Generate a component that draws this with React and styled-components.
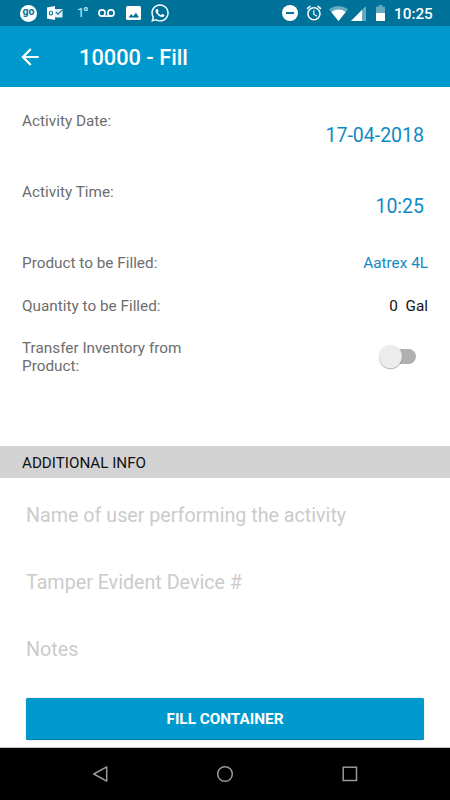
import React from "react";
import styled, { createGlobalStyle } from "styled-components";
import { MdArrowBack, MdAlarm } from "react-icons/md";
import { FaWhatsapp } from "react-icons/fa";

const GlobalStyle = createGlobalStyle`
  * { box-sizing: border-box; }
  body { margin: 0; background: #fff; font-family: Roboto, sans-serif; }
`;

const Screen = styled.div`
  display: flex;
  flex-direction: column;
  width: 450px;
  height: 800px;
  background: #fff;
  overflow: hidden;
`;

const StatusBar = styled.header`
  display: flex;
  justify-content: space-between;
  height: 26px;
  flex: none;
  padding: 0 17px 0 20px;
  background: #007299;
  color: #fff;
`;

const StatusGroup = styled.div`
  display: flex;
  align-items: center;
  height: 26px;
`;

const StatusIcon = styled.span`
  display: flex;
  flex: none;
  width: ${(p) => p.$width}px;
  margin-right: ${(p) => p.$gap || 0}px;
  svg { display: block; flex: none; }
`;

const GoBadge = styled.span`
  width: 17px;
  height: 17px;
  margin-right: 10px;
  border-radius: 50%;
  background: #fff;
  color: #007299;
  font-size: 10.5px;
  font-weight: 700;
  line-height: 14px;
  text-align: center;
`;

const Temperature = styled.span`
  display: flex;
  width: 11px;
  margin-right: 10px;
  color: #d6e8ef;
  font-size: 13px;
  line-height: 26px;
  white-space: nowrap;
`;

const Degree = styled.span`
  margin-left: -1.5px;
  padding-top: 1px;
  font-size: 16px;
`;

const Clock = styled.span`
  width: 39px;
  padding-top: 2px;
  font-size: 15.3px;
  font-weight: 500;
  line-height: 26px;
  white-space: nowrap;
`;

const AppBar = styled.div`
  display: flex;
  align-items: center;
  flex: none;
  height: 61px;
  padding-left: 17px;
  background: #0099cd;
  color: #fff;
`;

const BackButton = styled.button`
  display: flex;
  margin: 0 36px 0 0;
  padding: 0;
  border: 0;
  background: none;
  color: inherit;
`;

const Title = styled.h1`
  margin: 3px 0 0;
  font-size: 21.8px;
  font-weight: 500;
  line-height: 26px;
`;

const Details = styled.main`
  flex: none;
  height: 359px;
  padding: 25px 22px 0;
`;

const Row = styled.div`
  display: flex;
  justify-content: space-between;
  height: ${(p) => p.$height}px;
`;

const Label = styled.div`
  width: 180px;
  color: #6d6d6d;
  font-size: 15.32px;
  line-height: 18px;
`;

const PickerValue = styled.div`
  padding: 12px 4px 0 0;
  color: #108ac4;
  font-size: 19.5px;
  line-height: 24px;
`;

const Value = styled.div`
  color: ${(p) => (p.$link ? "#108ac4" : "#111")};
  font-size: 15.32px;
  line-height: 18px;
  white-space: pre;
`;

const Switch = styled.div`
  display: flex;
  align-items: center;
  width: 34px;
  height: 15px;
  margin: 10px 12px 0 0;
  border-radius: 8px;
  background: #b0b0b0;
`;

const Thumb = styled.span`
  width: 23px;
  height: 23px;
  margin-left: -3px;
  border-radius: 50%;
  background: #ececec;
  box-shadow: 0 1px 1px rgba(0, 0, 0, 0.3);
`;

const SectionHeader = styled.h2`
  flex: none;
  height: 32px;
  margin: 0;
  padding: 1px 22px 0;
  background: #d3d3d3;
  color: #111;
  font-size: 15.2px;
  font-weight: 400;
  line-height: 32px;
`;

const Form = styled.form`
  display: flex;
  flex-direction: column;
  flex: 1;
  padding: 4px 26px 0;
  border-bottom: 1px solid #c4c4c4;
`;

const Field = styled.input`
  flex: none;
  width: 100%;
  height: 67px;
  padding: 0;
  border: 0;
  outline: 0;
  background: transparent;
  font: 400 19.7px Roboto, sans-serif;
  &::placeholder { color: #cbcbcb; opacity: 1; }
`;

const SubmitButton = styled.button`
  flex: none;
  height: 42px;
  margin-top: 15px;
  padding: 0;
  border: 0;
  border-radius: 2px;
  background: #0099cd;
  box-shadow: inset 0 -1px #0084b3, 0 0 1px rgba(0, 0, 0, 0.5);
  color: #fff;
  font: 700 15.3px/42px Roboto, sans-serif;
`;

const NavBar = styled.nav`
  display: flex;
  justify-content: space-between;
  align-items: center;
  flex: none;
  height: 52px;
  padding: 0 91px;
  background: #000;
`;

const NavIcon = styled.svg`
  display: block;
  width: 18px;
  height: 18px;
  fill: none;
  stroke: #999;
  stroke-width: 1.5;
`;

const fields = ["Name of user performing the activity", "Tamper Evident Device #", "Notes"];

export default function App() {
  return (
    <>
      <GlobalStyle />
      <Screen>
        <StatusBar>
          <StatusGroup>
            <GoBadge>go</GoBadge>
            <StatusIcon $width={16} $gap={14}>
              <svg width="16" height="16" viewBox="0 0 16 16">
                <path d="M0 2.5 8 1v14l-8-1.5z" fill="#fff" />
                <ellipse cx="4" cy="8" rx="1.6" ry="2" fill="none" stroke="#007299" strokeWidth="1.1" />
                <path d="M8 4h7.5v8.5H8z" fill="#e4f0f4" />
                <path d="m8.8 6.8 2.2 2.4 4.3-4.4" fill="none" stroke="#007299" strokeWidth="1.1" />
              </svg>
            </StatusIcon>
            <Temperature>1<Degree>°</Degree></Temperature>
            <StatusIcon $width={17} $gap={11}>
              <svg width="17" height="10" viewBox="0 0 17 10" fill="none" stroke="#fff" strokeWidth="1.6">
                <circle cx="4" cy="5" r="3.1" />
                <circle cx="13" cy="5" r="3.1" />
                <path d="M4 8.1h9" />
              </svg>
            </StatusIcon>
            <StatusIcon $width={15} $gap={9}>
              <svg width="15" height="14" viewBox="0 0 15 14">
                <rect width="15" height="14" rx="1.5" fill="#fff" />
                <path d="M2.5 11.5 5.2 8l2 2.3L10 6.8l3 4.7z" fill="#007299" />
              </svg>
            </StatusIcon>
            <StatusIcon $width={18}><FaWhatsapp size={20} /></StatusIcon>
          </StatusGroup>
          <StatusGroup>
            <StatusIcon $width={16} $gap={7}>
              <svg width="16" height="16" viewBox="0 0 16 16">
                <circle cx="8" cy="8" r="8" fill="#fff" />
                <path d="M4 8h8" stroke="#007299" strokeWidth="2" />
              </svg>
            </StatusIcon>
            <StatusIcon $width={18} $gap={6}><MdAlarm size={18} /></StatusIcon>
            <StatusIcon $width={19} $gap={3}>
              <svg width="19" height="15" viewBox="0 0 19 15">
                <path d="M0 3.3Q9.5-3.3 19 3.3L9.5 15z" fill="#66aac2" />
                <path d="M2.3 6Q9.5 1.2 16.7 6L9.5 15z" fill="#fff" />
              </svg>
            </StatusIcon>
            <StatusIcon $width={15} $gap={10}>
              <svg width="15" height="15" viewBox="0 0 15 15">
                <path d="M15 0v15H0z" fill="#66aac2" />
                <path d="M11 4v11H0z" fill="#fff" />
              </svg>
            </StatusIcon>
            <StatusIcon $width={9} $gap={9}>
              <svg width="9" height="16" viewBox="0 0 9 16">
                <path d="M0 1.7h2.7V0h3.6v1.7H9V8H0z" fill="#66aac2" />
                <path d="M0 8h9v8H0z" fill="#fff" />
              </svg>
            </StatusIcon>
            <Clock>10:25</Clock>
          </StatusGroup>
        </StatusBar>
        <AppBar>
          <BackButton type="button" aria-label="Back"><MdArrowBack size={26} /></BackButton>
          <Title>10000 - Fill</Title>
        </AppBar>
        <Details>
          <Row $height={71}>
            <Label>Activity Date:</Label>
            <PickerValue>17-04-2018</PickerValue>
          </Row>
          <Row $height={71}>
            <Label>Activity Time:</Label>
            <PickerValue>10:25</PickerValue>
          </Row>
          <Row $height={43}>
            <Label>Product to be Filled:</Label>
            <Value $link>Aatrex 4L</Value>
          </Row>
          <Row $height={42}>
            <Label>Quantity to be Filled:</Label>
            <Value>{"0  Gal"}</Value>
          </Row>
          <Row $height={36}>
            <Label>Transfer Inventory from Product:</Label>
            <Switch role="switch" aria-checked="false"><Thumb /></Switch>
          </Row>
        </Details>
        <SectionHeader>ADDITIONAL INFO</SectionHeader>
        <Form>
          {fields.map((name) => <Field key={name} placeholder={name} />)}
          <SubmitButton type="button">FILL CONTAINER</SubmitButton>
        </Form>
        <NavBar>
          <NavIcon viewBox="0 0 18 18"><path d="M2.8 9 15.7 1.8v14.4z" strokeLinejoin="round" /></NavIcon>
          <NavIcon viewBox="0 0 18 18"><circle cx="9" cy="9" r="7.3" /></NavIcon>
          <NavIcon viewBox="0 0 18 18"><rect x="2.2" y="2.2" width="13.3" height="13.3" /></NavIcon>
        </NavBar>
      </Screen>
    </>
  );
}
